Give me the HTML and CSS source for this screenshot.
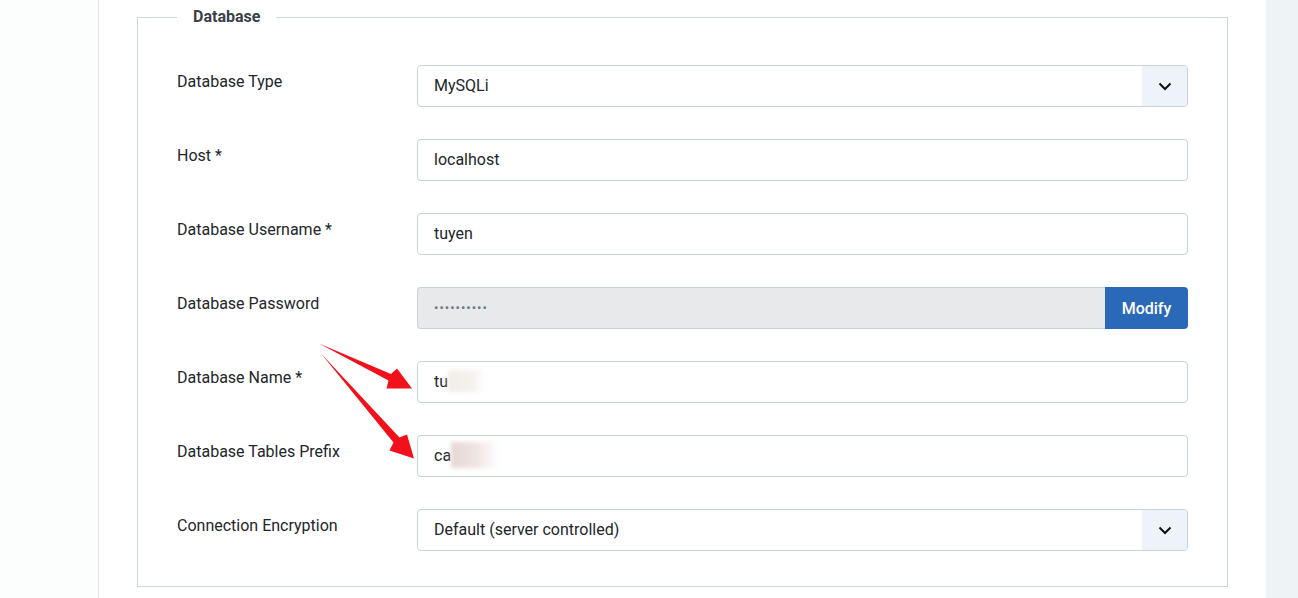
FILE: index.html
```html
<!DOCTYPE html>
<html>
<head>
    <title>Database Configuration</title>
    <link rel="stylesheet" href="styles.css">
</head>
<body>
    <div class="page">
        <div class="side"></div>
        <div class="main">
            <fieldset class="db-set">
                <legend>Database</legend>

                <div class="row">
                    <label>Database Type</label>
                    <div class="control select">
                        <span class="value">MySQLi</span>
                        <span class="arrow">
                            <svg width="14" height="9" viewBox="0 0 14 9"><path d="M1.5 1.5 L7 7 L12.5 1.5" fill="none" stroke="#111" stroke-width="2"/></svg>
                        </span>
                    </div>
                </div>

                <div class="row">
                    <label>Host *</label>
                    <div class="control"><span class="value">localhost</span></div>
                </div>

                <div class="row">
                    <label>Database Username *</label>
                    <div class="control"><span class="value">tuyen</span></div>
                </div>

                <div class="row">
                    <label>Database Password</label>
                    <div class="group">
                        <div class="control locked"><span class="dots">••••••••••</span></div>
                        <button type="button" class="btn-modify">Modify</button>
                    </div>
                </div>

                <div class="row">
                    <label>Database Name *</label>
                    <div class="control"><span class="value">tu</span><span class="smudge warm"></span></div>
                </div>

                <div class="row">
                    <label>Database Tables Prefix</label>
                    <div class="control"><span class="value">ca</span><span class="smudge rose"></span></div>
                </div>

                <div class="row">
                    <label>Connection Encryption</label>
                    <div class="control select">
                        <span class="value">Default (server controlled)</span>
                        <span class="arrow">
                            <svg width="14" height="9" viewBox="0 0 14 9"><path d="M1.5 1.5 L7 7 L12.5 1.5" fill="none" stroke="#111" stroke-width="2"/></svg>
                        </span>
                    </div>
                </div>
            </fieldset>
        </div>
        <div class="rail"></div>
    </div>

    <svg class="marks" width="1298" height="598" viewBox="0 0 1298 598">
        <polygon fill="#f2111a" points="319,343.5 391,374 397,368.5 412,388.5 386.5,388.5 388.5,380.5"/>
        <polygon fill="#f2111a" points="321,353.5 399.5,437.5 407,434.5 414,458.5 389.5,450.5 393.5,442.5"/>
    </svg>
</body>
</html>
```

FILE: styles.css
```css
body {
    margin: 0;
    font-family: Roboto, "Liberation Sans", sans-serif;
    font-size: 16px;
    color: #22262a;
    background-color: #fff;
}

.page {
    display: flex;
    height: 598px;
    overflow: hidden;
}

.side {
    width: 98px;
    background-color: #fcfdfd;
    border-right: 1px solid #dbe5eb;
}

.main {
    flex: 1;
    padding: 0 38px 0 38px;
    background-color: #fff;
}

.rail {
    width: 32px;
    background-color: #eef3f6;
}

.db-set {
    margin: 4px 0 0;
    padding: 35px 39px 35px;
    border: 1px solid #c9d8de;
    min-width: 0;
}

.db-set legend {
    padding: 0 16px;
    margin-left: 0;
    font-weight: bold;
    line-height: 26px;
    color: #3b3f47;
}

.row {
    display: flex;
    align-items: flex-start;
    margin-bottom: 32px;
}

.row:last-child {
    margin-bottom: 0;
}

.row label {
    width: 240px;
    padding-top: 5px;
    line-height: 24px;
}

.control {
    flex: 1;
    display: flex;
    align-items: center;
    box-sizing: border-box;
    height: 42px;
    padding: 0 0 2px 16px;
    border: 1px solid #c5d4dc;
    border-radius: 4px;
    background-color: #fff;
}

.select {
    padding-bottom: 0;
}

.select .value {
    flex: 1;
    padding-bottom: 2px;
}

.select .arrow {
    width: 45px;
    height: 100%;
    display: flex;
    align-items: center;
    justify-content: center;
    background-color: #eef3fa;
    border-radius: 0 4px 4px 0;
}

.group {
    flex: 1;
    display: flex;
}

.locked {
    background-color: #e8e9eb;
    border-radius: 4px 0 0 4px;
    border-right: none;
}

.dots {
    color: #6f7780;
    font-size: 13px;
    letter-spacing: 1px;
}

.btn-modify {
    width: 83px;
    height: 42px;
    border: none;
    border-radius: 0 4px 4px 0;
    background-color: #2a69b8;
    color: #fff;
    font-family: Roboto, "Liberation Sans", sans-serif;
    font-size: 16px;
    font-weight: 500;
    cursor: pointer;
}

.smudge {
    display: inline-block;
    height: 22px;
    filter: blur(2px);
}

.smudge.warm {
    width: 38px;
    background: linear-gradient(to right, #f1ede8, #f4f1ee 60%, #fff);
}

.smudge.rose {
    width: 48px;
    height: 26px;
    background: linear-gradient(to right, #e6d6d3, #efe6e4 55%, #fff);
}

.marks {
    position: absolute;
    left: 0;
    top: 0;
    pointer-events: none;
}
```
